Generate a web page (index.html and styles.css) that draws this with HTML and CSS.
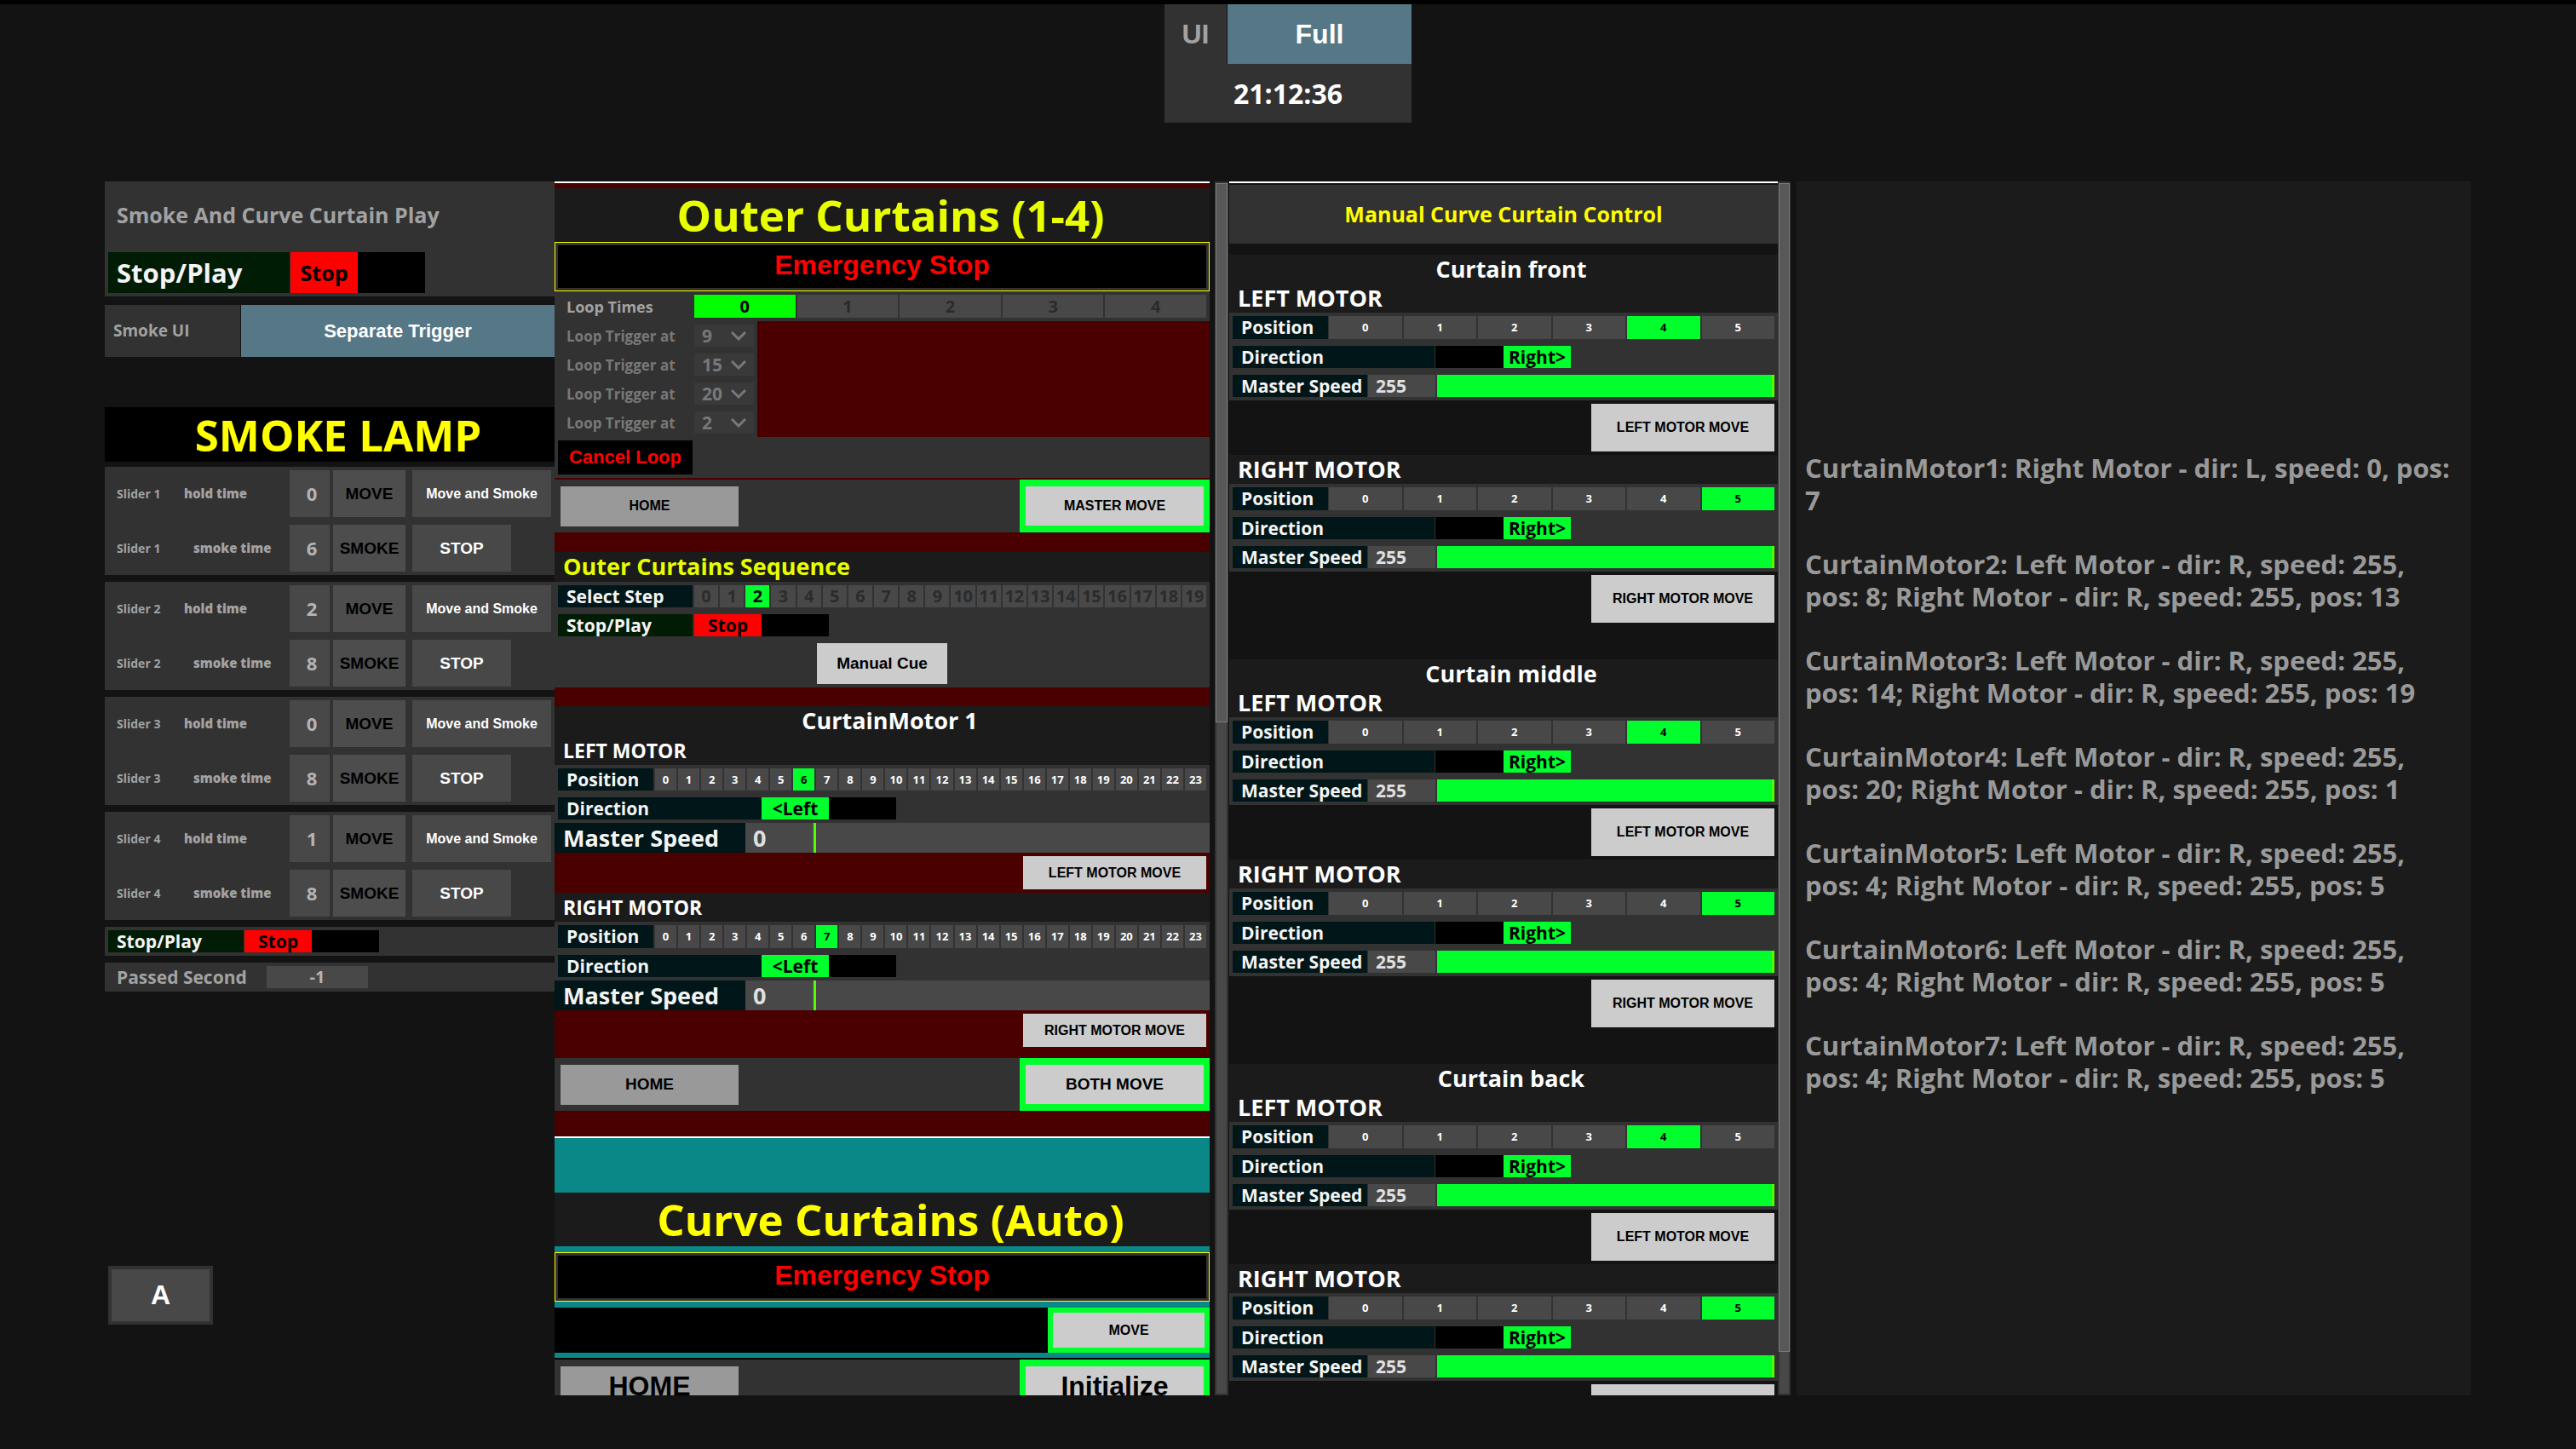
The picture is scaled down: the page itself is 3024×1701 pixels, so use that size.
FILE: index.html
```
<!DOCTYPE html>
<html lang="en">
<head>
<meta charset="utf-8">
<title>Curtain and Smoke Control</title>
<link rel="stylesheet" href="styles.css">
</head>
<body>
<header class="topbar">
  <div class="mode">
    <span class="mode-label">UI</span>
    <button class="mode-btn">Full</button>
    <time class="clock">21:12:36</time>
  </div>
</header>

<main class="stage">
  <section class="smoke" aria-label="Smoke">
    <div class="panel play-panel">
      <h2 class="play-title">Smoke And Curve Curtain Play</h2>
      <div class="row row-big">
        <span class="tag tag-green tag-big">Stop/Play</span>
        <div class="toggle"><button class="stop">Stop</button><button aria-label="Play"></button></div>
      </div>
    </div>
    <div class="smoke-ui">
      <span class="smoke-ui-label">Smoke UI</span>
      <button class="trigger">Separate Trigger</button>
    </div>
    <h1 class="lamp-title">SMOKE LAMP</h1>
    <div class="sliders">
      <div class="panel slider">
        <div class="slider-row"><label for="h1"><span>Slider 1</span><b>hold time</b></label><input id="h1" value="0"><button class="dark">MOVE</button><button class="wide">Move and Smoke</button></div>
        <div class="slider-row"><label for="s1"><span>Slider 1</span><b class="inset">smoke time</b></label><input id="s1" value="6"><button class="dark">SMOKE</button><button class="halt">STOP</button></div>
      </div>
      <div class="panel slider">
        <div class="slider-row"><label for="h2"><span>Slider 2</span><b>hold time</b></label><input id="h2" value="2"><button class="dark">MOVE</button><button class="wide">Move and Smoke</button></div>
        <div class="slider-row"><label for="s2"><span>Slider 2</span><b class="inset">smoke time</b></label><input id="s2" value="8"><button class="dark">SMOKE</button><button class="halt">STOP</button></div>
      </div>
      <div class="panel slider">
        <div class="slider-row"><label for="h3"><span>Slider 3</span><b>hold time</b></label><input id="h3" value="0"><button class="dark">MOVE</button><button class="wide">Move and Smoke</button></div>
        <div class="slider-row"><label for="s3"><span>Slider 3</span><b class="inset">smoke time</b></label><input id="s3" value="8"><button class="dark">SMOKE</button><button class="halt">STOP</button></div>
      </div>
      <div class="panel slider">
        <div class="slider-row"><label for="h4"><span>Slider 4</span><b>hold time</b></label><input id="h4" value="1"><button class="dark">MOVE</button><button class="wide">Move and Smoke</button></div>
        <div class="slider-row"><label for="s4"><span>Slider 4</span><b class="inset">smoke time</b></label><input id="s4" value="8"><button class="dark">SMOKE</button><button class="halt">STOP</button></div>
      </div>
      <div class="panel row">
        <span class="tag tag-green tag-mid">Stop/Play</span>
        <div class="toggle"><button class="stop">Stop</button><button aria-label="Play"></button></div>
      </div>
      <div class="panel row passed">
        <label for="passed">Passed Second</label>
        <input id="passed" value="-1" readonly>
      </div>
    </div>
    <button class="page-btn">A</button>
  </section>

  <section class="pane" aria-label="Automatic curtains">
    <div class="outer">
      <h1 class="title lime">Outer Curtains (1-4)</h1>
      <div class="estop"><button>Emergency Stop</button></div>
      <div class="loop">
        <div class="row loop-times">
          <span class="loop-label bright">Loop Times</span>
          <div class="strip off pure"><button class="on">0</button><button>1</button><button>2</button><button>3</button><button>4</button></div>
        </div>
        <div class="row trig"><label for="t1">Loop Trigger at</label><span class="select"><select id="t1" disabled><option>9</option></select><svg viewBox="0 0 18 11" aria-hidden="true"><path d="M1 1l8 8 8-8"/></svg></span></div>
        <div class="row trig"><label for="t2">Loop Trigger at</label><span class="select"><select id="t2" disabled><option>15</option></select><svg viewBox="0 0 18 11" aria-hidden="true"><path d="M1 1l8 8 8-8"/></svg></span></div>
        <div class="row trig"><label for="t3">Loop Trigger at</label><span class="select"><select id="t3" disabled><option>20</option></select><svg viewBox="0 0 18 11" aria-hidden="true"><path d="M1 1l8 8 8-8"/></svg></span></div>
        <div class="row trig"><label for="t4">Loop Trigger at</label><span class="select"><select id="t4" disabled><option>2</option></select><svg viewBox="0 0 18 11" aria-hidden="true"><path d="M1 1l8 8 8-8"/></svg></span></div>
        <div class="row cancel-row"><button class="cancel">Cancel Loop</button></div>
      </div>
      <div class="actions"><button class="home">HOME</button><button class="go">MASTER MOVE</button></div>

      <div class="sequence">
        <h2 class="head lime">Outer Curtains Sequence</h2>
        <div class="rows">
          <div class="row"><span class="tag">Select Step</span><div class="strip off"><button>0</button><button>1</button><button class="on">2</button><button>3</button><button>4</button><button>5</button><button>6</button><button>7</button><button>8</button><button>9</button><button>10</button><button>11</button><button>12</button><button>13</button><button>14</button><button>15</button><button>16</button><button>17</button><button>18</button><button>19</button></div></div>
          <div class="row"><span class="tag tag-green">Stop/Play</span><div class="toggle"><button class="stop">Stop</button><button aria-label="Play"></button></div></div>
          <button class="cue">Manual Cue</button>
        </div>
      </div>

      <div class="motors">
        <h2 class="head center">CurtainMotor 1</h2>
        <h3 class="subhead">LEFT MOTOR</h3>
        <div class="rows">
          <div class="row"><span class="tag tag-short">Position</span><div class="strip small"><button>0</button><button>1</button><button>2</button><button>3</button><button>4</button><button>5</button><button class="on">6</button><button>7</button><button>8</button><button>9</button><button>10</button><button>11</button><button>12</button><button>13</button><button>14</button><button>15</button><button>16</button><button>17</button><button>18</button><button>19</button><button>20</button><button>21</button><button>22</button><button>23</button></div></div>
          <div class="row flush"><span class="tag tag-long">Direction</span><div class="toggle"><button class="on">&lt;Left</button><button aria-label="Right"></button></div></div>
        </div>
        <div class="speed speed-big"><label class="tag" for="ml">Master Speed</label><output for="ml">0</output><input id="ml" type="range" min="0" max="255" value="0"></div>
        <div class="move-row"><button>LEFT MOTOR MOVE</button></div>
        <h3 class="subhead">RIGHT MOTOR</h3>
        <div class="rows tall">
          <div class="row"><span class="tag tag-short">Position</span><div class="strip small"><button>0</button><button>1</button><button>2</button><button>3</button><button>4</button><button>5</button><button>6</button><button class="on">7</button><button>8</button><button>9</button><button>10</button><button>11</button><button>12</button><button>13</button><button>14</button><button>15</button><button>16</button><button>17</button><button>18</button><button>19</button><button>20</button><button>21</button><button>22</button><button>23</button></div></div>
          <div class="row flush"><span class="tag tag-long">Direction</span><div class="toggle"><button class="on">&lt;Left</button><button aria-label="Right"></button></div></div>
        </div>
        <div class="speed speed-big"><label class="tag" for="mr">Master Speed</label><output for="mr">0</output><input id="mr" type="range" min="0" max="255" value="0"></div>
        <div class="move-row"><button>RIGHT MOTOR MOVE</button></div>
      </div>
      <div class="actions medium"><button class="home">HOME</button><button class="go">BOTH MOVE</button></div>
    </div>

    <div class="curve">
      <h1 class="title">Curve Curtains (Auto)</h1>
      <div class="estop"><button>Emergency Stop</button></div>
      <div class="curve-move"><button class="go">MOVE</button></div>
      <div class="actions large"><button class="home">HOME</button><button class="go">Initialize</button></div>
    </div>
  </section>
  <div class="scroll scroll-auto" aria-hidden="true"><i></i></div>

  <section class="pane manual" aria-label="Manual curtains">
    <h2 class="manual-title">Manual Curve Curtain Control</h2>
    <article class="curtain">
      <h2 class="head center">Curtain front</h2>
      <h3 class="head">LEFT MOTOR</h3>
      <div class="rows">
        <div class="row"><span class="tag tag-short">Position</span><div class="strip small"><button>0</button><button>1</button><button>2</button><button>3</button><button class="on">4</button><button>5</button></div></div>
        <div class="row"><span class="tag tag-long">Direction</span><div class="toggle"><button aria-label="Left"></button><button class="on">Right&gt;</button></div></div>
        <div class="row speed"><label class="tag" for="fl">Master Speed</label><output for="fl">255</output><input id="fl" type="range" min="0" max="255" value="255"></div>
      </div>
      <div class="move-row"><button>LEFT MOTOR MOVE</button></div>
      <h3 class="head">RIGHT MOTOR</h3>
      <div class="rows">
        <div class="row"><span class="tag tag-short">Position</span><div class="strip small"><button>0</button><button>1</button><button>2</button><button>3</button><button>4</button><button class="on">5</button></div></div>
        <div class="row"><span class="tag tag-long">Direction</span><div class="toggle"><button aria-label="Left"></button><button class="on">Right&gt;</button></div></div>
        <div class="row speed"><label class="tag" for="fr">Master Speed</label><output for="fr">255</output><input id="fr" type="range" min="0" max="255" value="255"></div>
      </div>
      <div class="move-row"><button>RIGHT MOTOR MOVE</button></div>
    </article>
    <article class="curtain">
      <h2 class="head center">Curtain middle</h2>
      <h3 class="head">LEFT MOTOR</h3>
      <div class="rows">
        <div class="row"><span class="tag tag-short">Position</span><div class="strip small"><button>0</button><button>1</button><button>2</button><button>3</button><button class="on">4</button><button>5</button></div></div>
        <div class="row"><span class="tag tag-long">Direction</span><div class="toggle"><button aria-label="Left"></button><button class="on">Right&gt;</button></div></div>
        <div class="row speed"><label class="tag" for="cl">Master Speed</label><output for="cl">255</output><input id="cl" type="range" min="0" max="255" value="255"></div>
      </div>
      <div class="move-row"><button>LEFT MOTOR MOVE</button></div>
      <h3 class="head">RIGHT MOTOR</h3>
      <div class="rows">
        <div class="row"><span class="tag tag-short">Position</span><div class="strip small"><button>0</button><button>1</button><button>2</button><button>3</button><button>4</button><button class="on">5</button></div></div>
        <div class="row"><span class="tag tag-long">Direction</span><div class="toggle"><button aria-label="Left"></button><button class="on">Right&gt;</button></div></div>
        <div class="row speed"><label class="tag" for="cr">Master Speed</label><output for="cr">255</output><input id="cr" type="range" min="0" max="255" value="255"></div>
      </div>
      <div class="move-row"><button>RIGHT MOTOR MOVE</button></div>
    </article>
    <article class="curtain">
      <h2 class="head center">Curtain back</h2>
      <h3 class="head">LEFT MOTOR</h3>
      <div class="rows">
        <div class="row"><span class="tag tag-short">Position</span><div class="strip small"><button>0</button><button>1</button><button>2</button><button>3</button><button class="on">4</button><button>5</button></div></div>
        <div class="row"><span class="tag tag-long">Direction</span><div class="toggle"><button aria-label="Left"></button><button class="on">Right&gt;</button></div></div>
        <div class="row speed"><label class="tag" for="bl">Master Speed</label><output for="bl">255</output><input id="bl" type="range" min="0" max="255" value="255"></div>
      </div>
      <div class="move-row"><button>LEFT MOTOR MOVE</button></div>
      <h3 class="head">RIGHT MOTOR</h3>
      <div class="rows">
        <div class="row"><span class="tag tag-short">Position</span><div class="strip small"><button>0</button><button>1</button><button>2</button><button>3</button><button>4</button><button class="on">5</button></div></div>
        <div class="row"><span class="tag tag-long">Direction</span><div class="toggle"><button aria-label="Left"></button><button class="on">Right&gt;</button></div></div>
        <div class="row speed"><label class="tag" for="br">Master Speed</label><output for="br">255</output><input id="br" type="range" min="0" max="255" value="255"></div>
      </div>
      <div class="move-row"><button aria-label="Right motor move"></button></div>
    </article>
  </section>
  <div class="scroll scroll-manual" aria-hidden="true"><i></i></div>

  <section class="log" aria-label="Motor log">
    <p>CurtainMotor1: Right Motor - dir: L, speed: 0, pos: 7</p>
    <p>CurtainMotor2: Left Motor - dir: R, speed: 255, pos: 8; Right Motor - dir: R, speed: 255, pos: 13</p>
    <p>CurtainMotor3: Left Motor - dir: R, speed: 255, pos: 14; Right Motor - dir: R, speed: 255, pos: 19</p>
    <p>CurtainMotor4: Left Motor - dir: R, speed: 255, pos: 20; Right Motor - dir: R, speed: 255, pos: 1</p>
    <p>CurtainMotor5: Left Motor - dir: R, speed: 255, pos: 4; Right Motor - dir: R, speed: 255, pos: 5</p>
    <p>CurtainMotor6: Left Motor - dir: R, speed: 255, pos: 4; Right Motor - dir: R, speed: 255, pos: 5</p>
    <p>CurtainMotor7: Left Motor - dir: R, speed: 255, pos: 4; Right Motor - dir: R, speed: 255, pos: 5</p>
  </section>
</main>
</body>
</html>
```
FILE: styles.css
```
:root {
  --bg: #131313;
  --panel: #323232;
  --head: #1b1b1b;
  --cell: #484848;
  --muted: #a2a2a2;
  --green: #00ff2c;
  --steel: #557786;
  --maroon: #4b0000;
  --teal: #0a8888;
  --sans: "Open Sans", "Noto Sans", sans-serif;
  --arial: "Liberation Sans", Arial, sans-serif;
}

* { box-sizing: border-box; }

body {
  margin: 0;
  background: var(--bg);
  color: #fff;
  font: bold 21px/1 var(--sans);
}

h1, h2, h3, p { margin: 0; font-weight: bold; }

button, input, select, output {
  margin: 0;
  padding: 0;
  border: 0;
  border-radius: 0;
  font: inherit;
  color: inherit;
}

button {
  display: flex;
  align-items: center;
  justify-content: center;
  min-width: 0;
  background: var(--cell);
  white-space: nowrap;
}

/* Top bar */
.topbar {
  display: flex;
  justify-content: center;
  height: 144px;
  border-top: 5px solid #000;
}

.mode {
  display: grid;
  grid-template: 70px 69px / 73px 216px;
  column-gap: 1px;
  font-size: 32px;
}

.mode-label, .clock {
  display: flex;
  align-items: center;
  justify-content: center;
  background: var(--panel);
}

.mode-label { color: var(--muted); font-family: var(--arial); }
.mode-btn { background: var(--steel); font-family: var(--arial); }
.clock { grid-column: 1 / -1; }

/* Columns: smoke, auto curtains, manual curtains, log, with scroll bars between */
.stage {
  display: grid;
  grid-template-columns: 528fr 769fr 23px 644fr 22px 792fr;
  height: calc(100vh - 276px);
  margin: 69px 123px 0;
}

.panel { background: var(--panel); }

.row { display: flex; gap: 2px; height: 26px; }

.tag {
  display: flex;
  align-items: center;
  flex: none;
  width: 158px;
  padding-left: 10px;
  overflow: hidden;
  background: #001618;
  color: #f4f4f4;
  white-space: nowrap;
}

.tag-green { background: #001c04; }
.tag-big { width: 213px; font-size: 31px; }
.tag-mid { width: 159px; }
.tag-short { width: 112px; }
.tag-long { width: 239px; }

.toggle { display: grid; grid-template-columns: 79px 79px; font-size: 21px; }
.toggle button { background: #000; color: #000; }
.toggle .stop { background: #f00; }
.toggle .on { background: var(--green); }

/* Smoke column */
.smoke { display: flex; flex-direction: column; }

.play-panel { padding: 0 4px 4px; }
.play-title { padding: 22px 10px 26px; color: var(--muted); font-size: 25px; line-height: 35px; }
.row-big { gap: 1px; height: 48px; }
.row-big .toggle { font-size: 25px; }

.smoke-ui { display: grid; grid-template-columns: 159px 1fr; gap: 1px; height: 61px; margin-top: 10px; }
.smoke-ui-label { display: flex; align-items: center; padding-left: 10px; background: var(--panel); color: var(--muted); font-size: 19px; }
.trigger { background: var(--steel); font: bold 22px var(--arial); }

.lamp-title {
  height: 64px;
  margin: 59px 0 6px;
  padding-left: 20px;
  background: #000;
  color: #ff0;
  font-size: 51px;
  line-height: 64px;
  text-align: center;
}

.sliders { display: flex; flex-direction: column; gap: 8px; }
.slider { display: grid; gap: 9px; padding: 4px; }
.slider-row { display: flex; height: 55px; }
.slider-row label { display: grid; grid-template-columns: 79px 1fr; align-items: center; width: 213px; padding-left: 10px; color: var(--muted); font-size: 14px; }
.slider-row label b { font-size: 15px; }
.slider-row label .inset { padding-left: 11px; }
.slider-row input { width: 47px; padding: 0 0 2px 5px; background: var(--cell); color: #b4b4b4; font-size: 22px; text-align: center; }
.slider-row button { font: bold 19px var(--arial); }
.slider-row .dark { width: 85px; margin: 0 8px 0 4px; background: #4d4d4d; color: #000; }
.slider-row .wide { flex: 1; font-size: 16px; }
.slider-row .halt { width: 116px; }

.sliders > .row { gap: 1px; height: 34px; padding: 4px; }
.passed label { width: 185px; padding-left: 10px; color: var(--muted); line-height: 26px; }
.passed input { width: 119px; padding-bottom: 2px; background: var(--cell); color: #b4b4b4; font-size: 20px; text-align: center; }

.page-btn {
  width: 123px;
  height: 69px;
  margin: auto 0 83px 4px;
  border: 4px solid var(--panel);
  font: bold 32px var(--arial);
}

/* Curtain panes */
.pane { overflow: hidden; border-top: 2px solid #fff; }
.outer { padding: 6px 0 30px; background: var(--maroon); }

.title {
  height: 63px;
  padding-left: 20px;
  background: var(--head);
  color: #ff0;
  font-size: 51px;
  line-height: 63px;
  text-align: center;
}

.lime { color: #e8ff00; }

.estop { display: grid; height: 58px; padding: 3px; border: 1px solid #ff0; background: var(--panel); }
.estop button { padding-bottom: 4px; background: #000; color: #f00; font: bold 32px var(--arial); }

.strip { display: grid; flex: 1; grid-auto-flow: column; grid-auto-columns: minmax(0, 1fr); gap: 2px; font-size: 20px; }
.strip.off { color: #2b2b2b; }
.strip.small { font-size: 13px; }
.strip .on { background: var(--green); color: #000; }
.strip.pure .on { background: #0f0; }

.loop > .row { height: 34px; padding: 4px; background: var(--panel); }
.loop > .loop-times { height: 35px; }
.loop-label, .trig label { display: flex; align-items: center; width: 158px; padding-left: 10px; color: #787878; font-size: 17px; }
.loop-label.bright { color: var(--muted); font-size: 18px; }
.loop > .trig { width: 238px; }
.loop > .cancel-row { height: 48px; }
.cancel { width: 158px; background: #000; color: #f00; font: bold 22px var(--arial); }

.select { display: grid; width: 70px; color: #787878; font-size: 21px; }
.select > * { grid-area: 1 / 1; }
.select select { width: 100%; padding-left: 9px; appearance: none; background: #393939; opacity: 1; }
.select svg { align-self: center; justify-self: end; width: 18px; height: 11px; margin-right: 9px; fill: none; stroke: #787878; stroke-width: 3; pointer-events: none; }

.actions { display: flex; align-items: center; justify-content: space-between; height: 62px; margin-top: 2px; padding-left: 7px; background: var(--panel); color: #000; font: bold 16px var(--arial); }
.actions.medium { margin-top: 0; font-size: 19px; }
.actions.large { font-size: 32px; }
.home { width: 209px; height: 47px; background: #999; }
.go { width: 223px; height: 100%; border: solid var(--green); border-width: 8px 7px; background: #ccc; }

.head, .subhead { height: 34px; padding-left: 10px; background: var(--head); font-size: 27px; line-height: 34px; }
.subhead { font-size: 23px; }
.head.center { padding-left: 18px; text-align: center; }
.sequence .head { height: 35px; }
.sequence { margin: 23px 0 22px; }
.motors > .head { height: 35px; }

.rows { display: grid; gap: 8px; padding: 4px; background: var(--panel); }
.manual .row { gap: 1px; }
.row.flush { gap: 0; }
.rows.tall .row:first-child { height: 27px; }
.cue { justify-self: center; width: 153px; height: 48px; background: #ccc; color: #000; font: bold 19px var(--arial); }

.speed { display: flex; }
.speed output { display: flex; align-items: center; flex: none; background: var(--cell); color: #e0e0e0; padding-left: 9px; }
.speed input { flex: 1; min-width: 0; height: 100%; appearance: none; background: var(--cell); }
.speed input::-webkit-slider-thumb { appearance: none; width: 3px; height: 26px; background: #50ff00; }
.speed-big { height: 35px; font-size: 27px; }
.speed-big .tag { width: 224px; }
.speed-big output { width: 80px; }
.speed-big input::-webkit-slider-thumb { height: 35px; }

.move-row { display: flex; justify-content: flex-end; height: 47px; padding: 4px; }
.move-row button { width: 215px; background: #ccc; color: #000; font: bold 16px var(--arial); }
.motors .move-row:last-child { height: 56px; padding-bottom: 13px; }

.curve { padding-top: 64px; border-top: 2px solid #fff; background: var(--teal); }
.curve .estop { margin: 7px 0; }
.curve-move { display: flex; justify-content: flex-end; height: 53px; background: #000; color: #000; font: bold 16px var(--arial); }
.curve-move .go { width: 190px; border-width: 6px; }
.curve .actions { height: 64px; margin-top: 6px; border-top: 2px solid #000; }

/* Manual pane */
.manual-title { height: 69px; margin: 2px 0 13px; background: var(--panel); color: #ff0; font-size: 25px; line-height: 69px; text-align: center; }
.curtain { padding-bottom: 39px; }
.manual .tag-long { width: 237px; }
.manual .toggle { grid-template-columns: 80px 79px; }
.manual .row:first-child { height: 27px; }
.manual .speed output { width: 79px; font-size: 21px; }
.manual .speed input { margin-left: 1px; background: var(--green); }
.manual .move-row { height: 64px; }

/* Scroll bars */
.scroll { display: grid; padding: 2px 1px; border: solid var(--bg); background: var(--cell); box-shadow: inset 0 0 0 2px var(--panel); }
.scroll i { border: 1px solid #7c7c7c; background: #585858; }
.scroll-auto { grid-template-rows: 633fr 788fr; border-width: 0 1px 0 6px; }
.scroll-manual { grid-template-rows: 1372fr 49fr; border-width: 0 7px 0 0; }

/* Log */
.log {
  display: flex;
  flex-direction: column;
  justify-content: center;
  gap: 37px;
  padding: 0 14px 38px 10px;
  background: var(--head);
  color: #999;
  font-size: 31px;
  line-height: 38px;
}
```
